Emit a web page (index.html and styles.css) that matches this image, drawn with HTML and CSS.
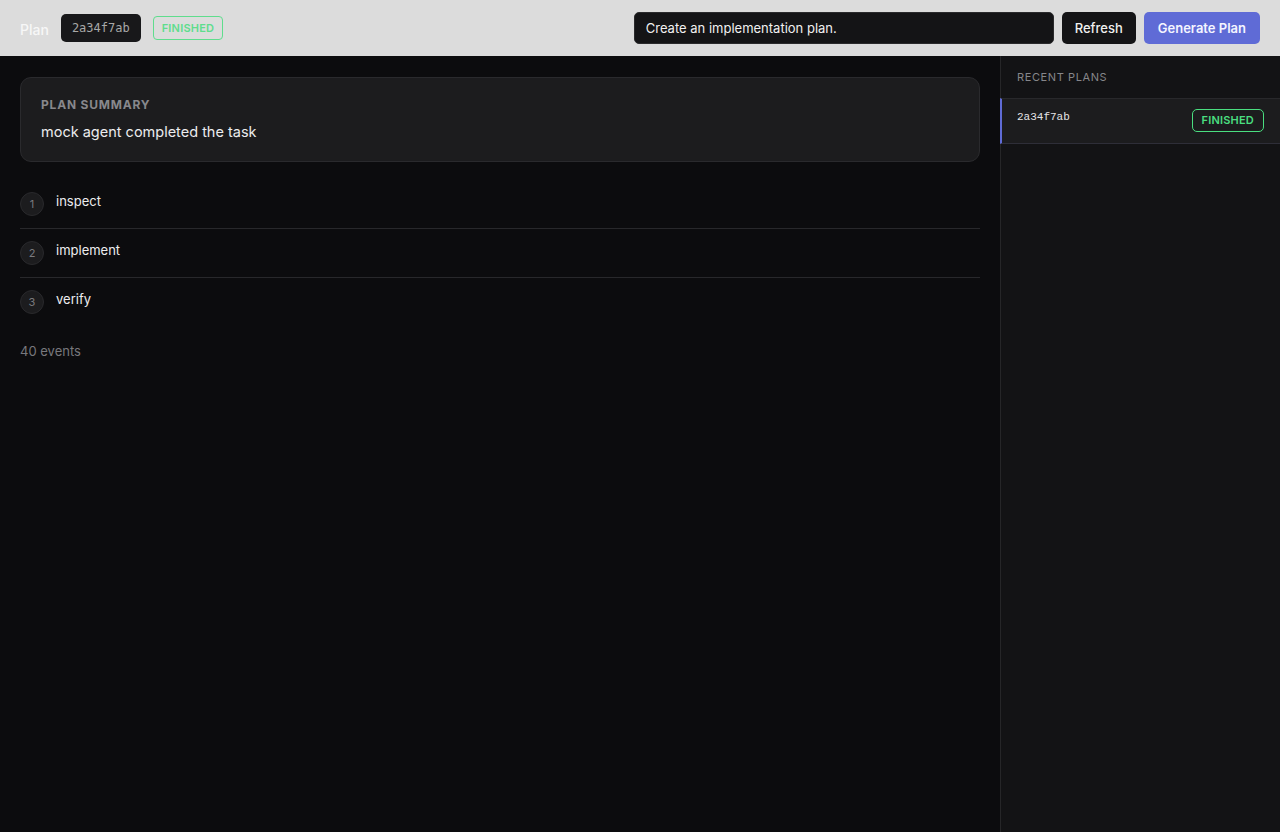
FILE: index.html
```html
<!DOCTYPE html>
<html>
<head>
<meta charset="utf-8">
<link rel="stylesheet" href="styles.css">
</head>
<body>
<header class="topbar">
  <div class="left">
    <span class="title">Plan</span>
    <span class="id-chip">2a34f7ab</span>
    <span class="badge">FINISHED</span>
  </div>
  <div class="right">
    <input class="prompt" type="text" value="Create an implementation plan.">
    <button class="btn dark">Refresh</button>
    <button class="btn primary">Generate Plan</button>
  </div>
</header>
<div class="body">
  <main class="main">
    <section class="card">
      <div class="card-label">PLAN SUMMARY</div>
      <div class="card-text">mock agent completed the task</div>
    </section>
    <ol class="steps">
      <li class="step"><span class="num">1</span><span class="step-text">inspect</span></li>
      <li class="step"><span class="num">2</span><span class="step-text">implement</span></li>
      <li class="step"><span class="num">3</span><span class="step-text">verify</span></li>
    </ol>
    <div class="events">40 events</div>
  </main>
  <aside class="sidebar">
    <div class="side-head">RECENT PLANS</div>
    <div class="side-item">
      <span class="side-id">2a34f7ab</span>
      <span class="badge big">FINISHED</span>
    </div>
  </aside>
</div>
</body>
</html>
```
FILE: styles.css
```css
* { box-sizing: border-box; }
html, body { margin: 0; height: 100%; }
body {
  font-family: Inter, "Noto Sans", sans-serif;
  background: #0c0c0e;
  color: #e8e8ea;
  display: flex;
  flex-direction: column;
}
.topbar {
  height: 56px;
  flex: none;
  background: #dcdcdc;
  display: flex;
  align-items: center;
  justify-content: space-between;
  padding: 0 20px;
}
.left { display: flex; align-items: center; gap: 12px; }
.title { color: #f7f7f7; font-size: 14px; font-weight: 500; margin-top: 2px; }
.id-chip {
  background: #18181a;
  color: #a8a8a8;
  font-family: "DejaVu Sans Mono", monospace;
  font-size: 12px;
  height: 28px;
  line-height: 28px;
  padding: 0 11px;
  border-radius: 5px;
}
.badge {
  color: #4ade80;
  border: 1px solid #4ade80;
  font-size: 11px;
  font-weight: 600;
  letter-spacing: 0.2px;
  border-radius: 4px;
  height: 24px;
  line-height: 22px;
  padding: 0 8px;
  opacity: 0.85;
}
.badge.big { opacity: 1; border-radius: 5px; height: 23px; line-height: 21px; padding: 0 9px; color: #4ade80; }
.right { display: flex; align-items: center; gap: 8px; }
.prompt {
  width: 420px;
  height: 32px;
  background: #141416;
  border: 1px solid #2a2a2c;
  border-radius: 5px;
  color: #f0f0f0;
  font-family: Inter, sans-serif;
  font-size: 13px;
  padding: 0 11px;
  outline: none;
}
.btn {
  height: 32px;
  border: none;
  border-radius: 5px;
  font-family: Inter, sans-serif;
  font-size: 13px;
}
.btn.dark { background: #141416; color: #f0f0f0; font-weight: 500; padding: 0 13px; }
.btn.primary { background: #5f6bd6; color: #f4f5ff; font-weight: 600; padding: 0 14px; }
.body { flex: 1; display: flex; min-height: 0; }
.main { flex: 1; padding: 21px 20px; }
.card {
  background: #1c1c1e;
  border: 1px solid #2a2a2d;
  border-radius: 11px;
  padding: 19px 20px 21px;
}
.card-label { font-size: 12px; font-weight: 700; letter-spacing: 0.8px; color: #88888c; }
.card-text { font-size: 14.5px; margin-top: 11px; color: #ececee; }
.steps { list-style: none; margin: 18px 0 0; padding: 0; }
.step {
  display: flex;
  align-items: flex-start;
  gap: 12px;
  height: 49px;
  padding-top: 12px;
  border-bottom: 1px solid #28282b;
}
.step:last-child { border-bottom: none; }
.num {
  width: 24px; height: 24px;
  border-radius: 50%;
  background: #1c1c1e;
  border: 1px solid #29292c;
  color: #7a7a7e;
  font-size: 11px;
  display: flex; align-items: center; justify-content: center;
}
.step-text { font-size: 13px; color: #ececee; margin-top: 1px; }
.events { margin-top: 16px; font-size: 13px; color: #78787c; }
.sidebar {
  width: 280px;
  flex: none;
  background: #131315;
  border-left: 1px solid #262628;
}
.side-head {
  font-size: 11px;
  letter-spacing: 0.6px;
  color: #86868a;
  padding: 14px 16px 14px;
}
.side-item {
  display: flex;
  justify-content: space-between;
  align-items: flex-start;
  height: 46px;
  background: #1c1c1e;
  border-top: 1px solid #28282b;
  border-bottom: 1px solid #2e2e38;
  border-left: 2px solid #5f6bd6;
  margin-left: -1px;
  padding: 11px 16px 0 15px;
}
.side-id { font-family: "Liberation Mono", monospace; font-size: 11px; color: #e4e4e6; margin-top: 1px; }
.side-item .badge { margin-top: -1px; }
```
